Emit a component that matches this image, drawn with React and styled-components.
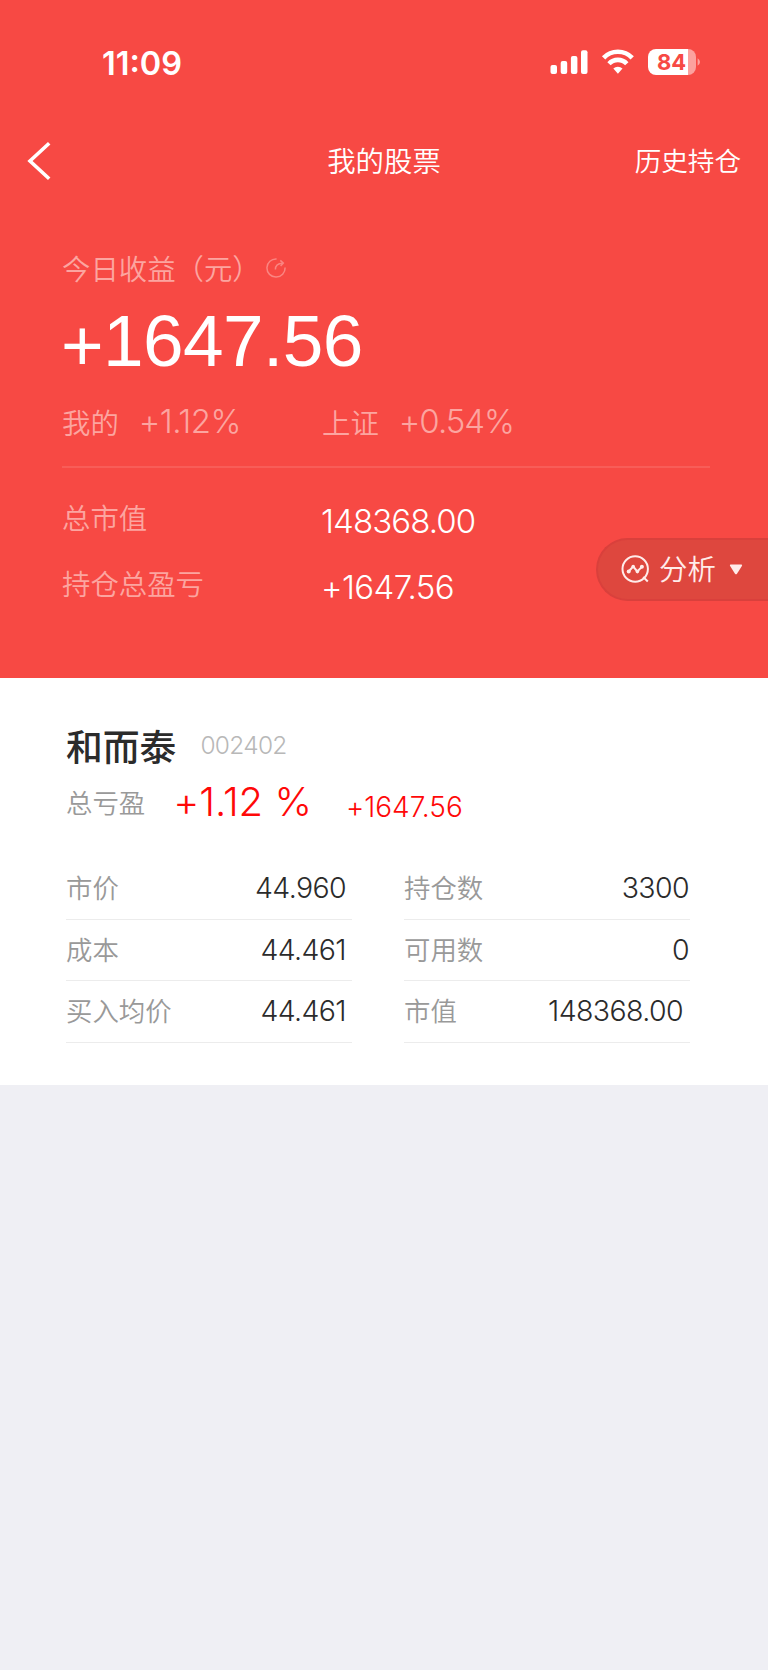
import React from 'react'
import styled, { createGlobalStyle } from "styled-components"

const GlobalStyle=createGlobalStyle `
*{
    box-sizing: border-box;
}
body{
    margin: 0;
    background-color: #efeff4;
}
`
const Page=styled.div `
width: 768px;
min-height: 1670px;
background-color: #efeff4;
font-family: "Noto Sans CJK SC", sans-serif;
`
const Header=styled.header `
position: relative;
height: 678px;
background-color: #f74944;
color: #fff;
overflow: hidden;
`
const StatusBar=styled.div `
display: flex;
align-items: center;
justify-content: space-between;
height: 124px;
padding: 0 68px 0 102px;
`
const Icons=styled.div `
display: flex;
align-items: center;
`
const NavBar=styled.nav `
display: grid;
grid-template-columns: 1fr auto 1fr;
align-items: center;
height: 72px;
padding: 2px 27px 0;
`
const NavTitle=styled.h1 `
margin: -2px 0 0;
font-size: 28.4px;
font-weight: 350;
line-height: 40px;
`
const NavLink=styled.span `
justify-self: end;
margin-top: -2px;
font-size: 26.6px;
font-weight: 350;
line-height: 40px;
`
const Summary=styled.section `
padding: 52px 58px 0 62px;
`
const Num=styled.span `
font-family: Inter, sans-serif;
font-size: ${({size})=>size}px;
font-weight: ${({weight})=>weight || 350};
font-feature-settings: "calt" 0;
letter-spacing: ${({gap})=>gap || 0}px;
line-height: 1.2;
white-space: pre;
`
const Time=styled(Num) `
margin-top: 2px;
font-feature-settings: "calt" 1;
`
const Caption=styled.span `
font-size: 28.4px;
font-weight: 350;
line-height: 40px;
color: #fca5a0;
`
const TodayRow=styled.div `
display: flex;
align-items: center;
height: 40px;
gap: 4px;
`
const Profit=styled.div `
height: 104px;
margin-left: -1px;
font-family: "Liberation Sans", Arial, sans-serif;
font-size: 73px;
letter-spacing: -0.6px;
line-height: 105px;
`
const Sign=styled.span `
vertical-align: -4px;
line-height: 1;
`
const Compare=styled.div `
display: grid;
grid-template-columns: 260px 1fr;
height: 76px;
padding-top: 10px;
border-bottom: 2px solid #f85d58;
`
const CompareItem=styled.div `
display: flex;
align-items: center;
height: 40px;
gap: 20px;
color: #fca5a0;
`
const Total=styled.div `
display: grid;
grid-template-columns: 259px 1fr;
align-items: center;
height: 66px;
`
const Totals=styled.div `
padding-top: 16px;
`
const TotalValue=styled.div `
display: flex;
padding-top: 9px;
`
const Analyse=styled.button `
position: absolute;
right: -2px;
top: 538px;
display: flex;
align-items: center;
width: 174px;
height: 63px;
padding: 0 0 0 23px;
border: 2px solid #d9403c;
border-right: none;
border-radius: 32px 0 0 32px;
background-color: #de473e;
color: #ffecea;
font-family: inherit;
font-size: 28.4px;
font-weight: 350;
line-height: 40px;
cursor: pointer;
`
const AnalyseText=styled.span `
margin: -3px 13px 0 8px;
`
const Holding=styled.section `
height: 407px;
padding: 45px 78px 0 66px;
background-color: #fff;
color: #2b2b2b;
`
const StockRow=styled.div `
display: flex;
align-items: center;
height: 46px;
gap: 24px;
`
const StockName=styled.h2 `
margin: -2px 0 0;
font-size: 36.8px;
font-weight: 500;
line-height: 46px;
`
const Code=styled(Num) `
color: #b8b8b8;
`
const GainRow=styled.div `
display: flex;
align-items: center;
height: 66px;
color: #ff0808;
`
const Label=styled.span `
font-size: 26.4px;
font-weight: 350;
line-height: 40px;
color: #999;
`
const GainRate=styled(Num) `
margin-left: 28px;
`
const GainValue=styled(Num) `
margin: 11px 0 0 34px;
`
const Table=styled.div `
display: grid;
grid-template-columns: 286px 286px;
column-gap: 52px;
padding-top: 23px;
`
const Cell=styled.div `
display: flex;
align-items: center;
justify-content: space-between;
height: 61.5px;
padding-right: ${({inset})=>inset}px;
border-bottom: 1px solid #ececec;
`
const CellLabel=styled(Label) `
margin-top: -2px;
`

const cells=[
  {label:"市价",value:"44.960",inset:6},
  {label:"持仓数",value:"3300",inset:1},
  {label:"成本",value:"44.461",inset:6},
  {label:"可用数",value:"0",inset:1},
  {label:"买入均价",value:"44.461",inset:6},
  {label:"市值",value:"148368.00",inset:7},
]

const StatusIcons=()=>(
  <Icons>
    <svg width="151" height="28" viewBox="0 0 151 28" fill="#fff">
      <rect x="1.5" y="17" width="6.5" height="9" rx="2"/>
      <rect x="11.7" y="13" width="6.5" height="13" rx="2"/>
      <rect x="21.9" y="8" width="6.5" height="18" rx="2"/>
      <rect x="32" y="2.3" width="6.5" height="23.7" rx="2"/>
      <g fill="none" stroke="#fff" strokeWidth="4.6">
        <path d="M54.6 9.8a19.8 19.8 0 0 1 28.6 0"/>
        <path d="M60 15.7a12.2 12.2 0 0 1 17.8 0"/>
      </g>
      <path d="M64.3 20.6a6.6 6.6 0 0 1 9.2 0l-4.6 5.2z"/>
      <path d="M107 1h32v26h-32a8 8 0 0 1-8-8v-10a8 8 0 0 1 8-8z"/>
      <path d="M139 1a8 8 0 0 1 8 8v10a8 8 0 0 1-8 8z" fill="#fca19e"/>
      <path d="M148.6 10.2q2.4 1.4 2.4 3.8t-2.4 3.8z" fill="#fca19e"/>
      <text x="122.5" y="21.8" textAnchor="middle" fontFamily="Inter, sans-serif" fontSize="22" fontWeight="700" fill="#f74944">84</text>
    </svg>
  </Icons>
)

const BackIcon=()=>(
  <svg width="24" height="40" viewBox="0 0 24 40" fill="none" stroke="#fff" strokeWidth="3.6">
    <path d="M22.2 2.3 3 20 22.2 37.8"/>
  </svg>
)

const ShareIcon=()=>(
  <svg width="22" height="22" viewBox="0 0 22 22" fill="none" stroke="#fa8581" strokeWidth="1.5">
    <path d="M11.6 1.9A9.1 9.1 0 1 0 20.1 10.5"/>
    <path d="M10.4 12.6Q10.2 6.6 17.6 6.2"/>
    <path d="M15.3 3.4 18.3 6.1 15.6 9"/>
  </svg>
)

const AnalyseIcon=()=>(
  <svg width="30" height="30" viewBox="0 0 30 30" fill="none" stroke="#ffecea" strokeWidth="2">
    <circle cx="14.2" cy="14" r="12.7"/>
    <path d="M22.2 22 26.8 26.5"/>
    <path d="M7.8 16.3 12.2 11.5 16.3 16.5 20.8 11.9"/>
    <g fill="#ffecea" stroke="none">
      <circle cx="7.7" cy="16.4" r="2"/>
      <circle cx="12.2" cy="11.5" r="1.8"/>
      <circle cx="16.4" cy="16.6" r="1.8"/>
      <circle cx="20.9" cy="11.8" r="2"/>
    </g>
  </svg>
)

const App =() => {
  return (
    <Page>
      <GlobalStyle/>
      <Header>
        <StatusBar>
          <Time size={32.5} weight={600}>11:09</Time>
          <StatusIcons/>
        </StatusBar>
        <NavBar>
          <BackIcon/>
          <NavTitle>我的股票</NavTitle>
          <NavLink>历史持仓</NavLink>
        </NavBar>
        <Summary>
          <TodayRow>
            <Caption>今日收益（元）</Caption>
            <ShareIcon/>
          </TodayRow>
          <Profit><Sign>+</Sign>1647.56</Profit>
          <Compare>
            <CompareItem>
              <Caption>我的</Caption>
              <Num size={33} weight={300} gap={-0.5}>+1.12%</Num>
            </CompareItem>
            <CompareItem>
              <Caption>上证</Caption>
              <Num size={33} weight={300} gap={-1}>+0.54%</Num>
            </CompareItem>
          </Compare>
          <Totals>
            <Total>
              <Caption>总市值</Caption>
              <TotalValue><Num size={33} gap={-0.9}>148368.00</Num></TotalValue>
            </Total>
            <Total>
              <Caption>持仓总盈亏</Caption>
              <TotalValue><Num size={33} gap={-0.6}>+1647.56</Num></TotalValue>
            </Total>
          </Totals>
        </Summary>
        <Analyse>
          <AnalyseIcon/>
          <AnalyseText>分析</AnalyseText>
          <svg width="14" height="11" viewBox="0 0 14 11" fill="#ffecea">
            <path d="M1.5.5h11q1 .3.4 1.4L8 9.8q-1 1-2 0L1.1 1.9Q.5.8 1.5.5z"/>
          </svg>
        </Analyse>
      </Header>
      <Holding>
        <StockRow>
          <StockName>和而泰</StockName>
          <Code size={24.5} weight={300} gap={-0.7}>002402</Code>
        </StockRow>
        <GainRow>
          <Label>总亏盈</Label>
          <GainRate size={40}>+1.12 %</GainRate>
          <GainValue size={28}>+1647.56</GainValue>
        </GainRow>
        <Table>
          {cells.map(({label,value,inset})=>(
            <Cell key={label} inset={inset}>
              <CellLabel>{label}</CellLabel>
              <Num size={28.5} gap={-0.6}>{value}</Num>
            </Cell>
          ))}
        </Table>
      </Holding>
    </Page>
  )
}

export default App
